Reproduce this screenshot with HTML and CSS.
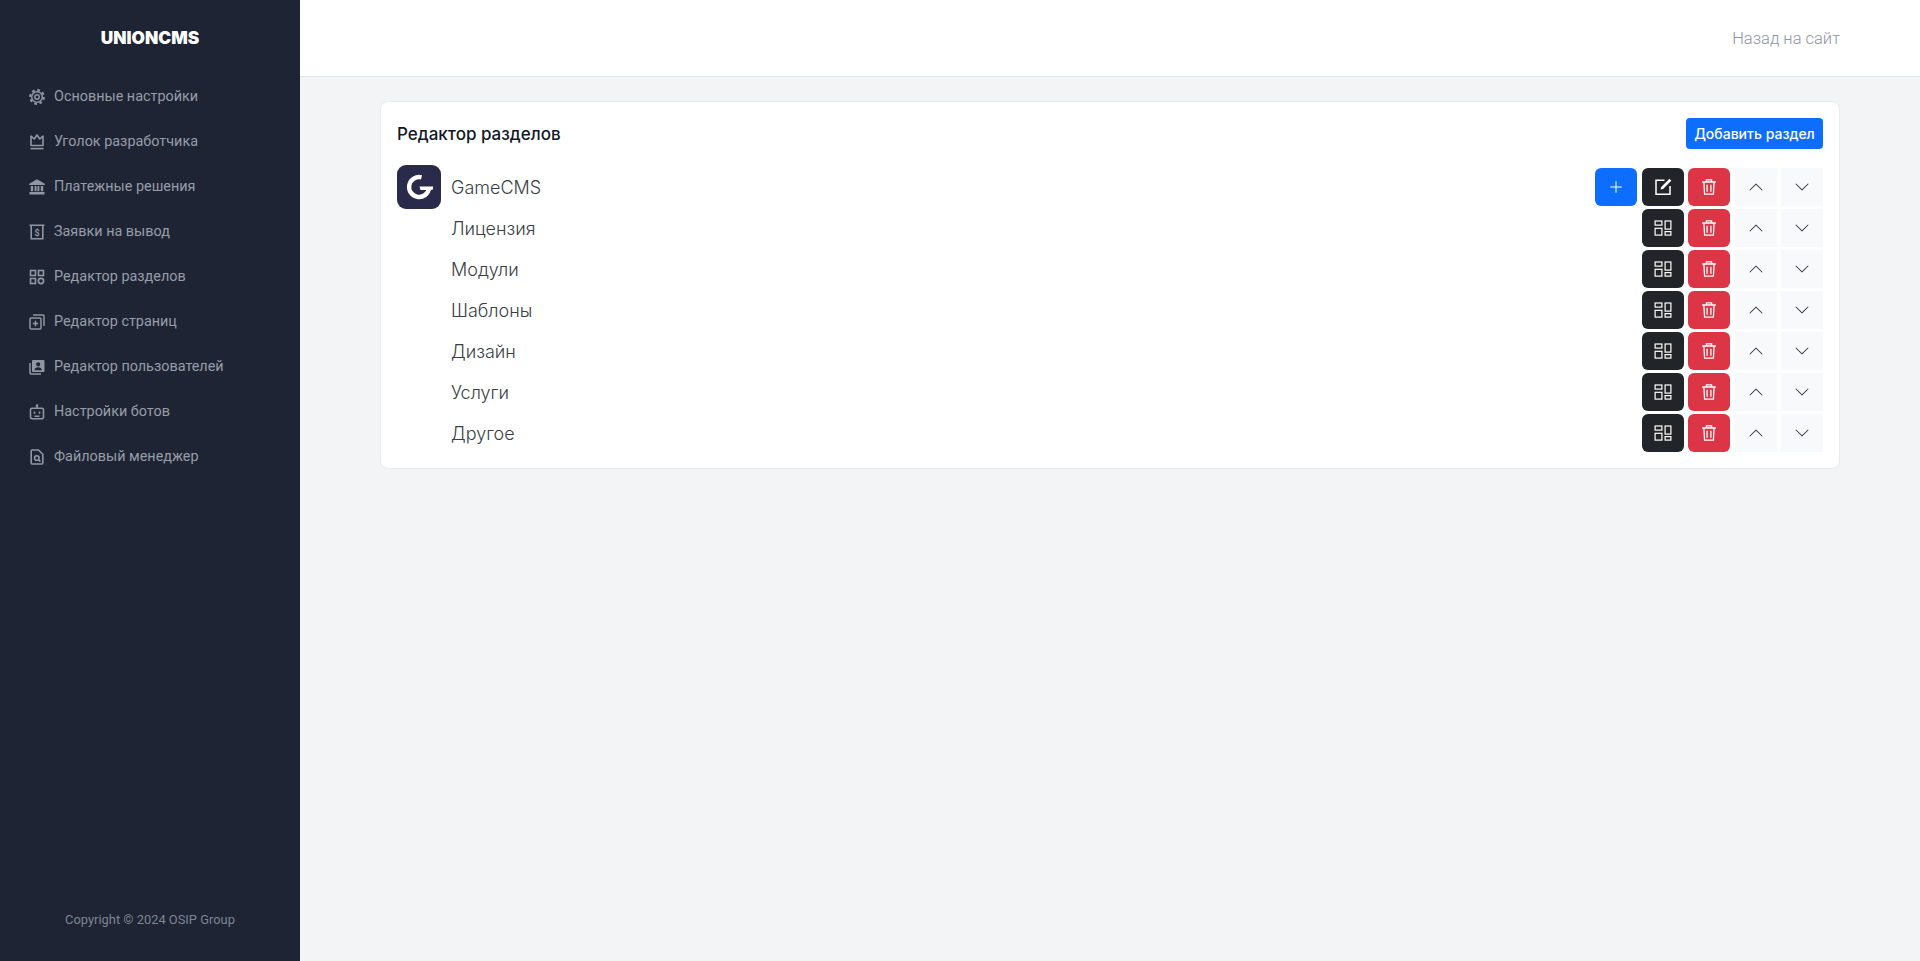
FILE: index.html
```html
<!DOCTYPE html>
<html lang="ru">
<head>
<meta charset="utf-8">
<title>UNIONCMS</title>
<link rel="stylesheet" href="styles.css">
</head>
<body>
<svg class="defs" width="0" height="0" aria-hidden="true">
  <defs>
    <symbol id="i-grid" viewBox="0 0 18 18"><g fill="none" stroke="currentColor" stroke-width="1.2"><rect x="1.1" y="2" width="6.8" height="4.1"/><rect x="1.1" y="9.3" width="6.8" height="6.8"/><rect x="11.1" y="2" width="5.8" height="8.1"/><rect x="11.1" y="12.6" width="5.8" height="3.5"/></g></symbol>
    <symbol id="i-trash" viewBox="0 0 18 18"><g fill="none" stroke="currentColor" stroke-width="1.3"><path d="M2.2 4h13.6M6.4 3.9V1.9h5.2v2M3.9 4.2l.7 12h8.8l.7-12M7.1 6.8v7M10.9 6.8v7"/></g></symbol>
    <symbol id="i-up" viewBox="0 0 16 16"><path fill="currentColor" d="M7.646 4.646a.5.5 0 0 1 .708 0l6 6a.5.5 0 0 1-.708.708L8 5.707l-5.646 5.647a.5.5 0 0 1-.708-.708l6-6z"/></symbol>
    <symbol id="i-down" viewBox="0 0 16 16"><path fill="currentColor" d="M1.646 4.646a.5.5 0 0 1 .708 0L8 10.293l5.646-5.647a.5.5 0 0 1 .708.708l-6 6a.5.5 0 0 1-.708 0l-6-6a.5.5 0 0 1 0-.708z"/></symbol>
  </defs>
</svg>
<aside class="sidebar">
  <div class="brand">UNIONCMS</div>
  <nav class="menu">
    <a class="menu-item"><svg class="menu-icon" viewBox="0 0 16 16"><g fill="none" stroke="currentColor"><circle cx="8" cy="8" r="5.3" stroke-width="1.5"/><circle cx="8" cy="8" r="6.9" stroke-width="2" stroke-dasharray="2.8 2.62"/><circle cx="8" cy="8" r="2.2" stroke-width="1.5"/></g></svg><span>Основные настройки</span></a>
    <a class="menu-item"><svg class="menu-icon" viewBox="0 0 16 16"><g fill="none" stroke="currentColor" stroke-width="1.6"><path d="M2 2l3.2 3L8 1l2.8 4L14 2v9.5H2z" stroke-linejoin="round"/><path d="M1.5 14.6h13"/></g></svg><span>Уголок разработчика</span></a>
    <a class="menu-item"><svg class="menu-icon" viewBox="0 0 16 16"><path fill="currentColor" d="M8 .3l7.8 4.4V6H.2V4.7zM1.8 7h2.4v5.2H1.8zm3.8 0H7.6v5.2H5.6zm2.8 0h2v5.2h-2zm3.4 0h2.4v5.2h-2.4zM.5 13h15v2.6H.5z"/></svg><span>Платежные решения</span></a>
    <a class="menu-item"><svg class="menu-icon" viewBox="0 0 16 16"><g fill="none" stroke="currentColor" stroke-width="1.6"><path d="M.5 1.3h15M2.2 1.3v13.4h11.6V1.3"/></g><text class="dollar" x="8" y="11.5" text-anchor="middle">$</text></svg><span>Заявки на вывод</span></a>
    <a class="menu-item"><svg class="menu-icon" viewBox="0 0 16 16"><g fill="none" stroke="currentColor" stroke-width="1.6"><rect x="1.5" y="1.5" width="5" height="5"/><rect x="9.5" y="1.5" width="5" height="5"/><rect x="1.5" y="9.5" width="5" height="5"/><circle cx="12" cy="12" r="2.6"/></g></svg><span>Редактор разделов</span></a>
    <a class="menu-item"><svg class="menu-icon" viewBox="0 0 16 16"><g fill="none" stroke="currentColor" stroke-width="1.5"><rect x="1" y="4" width="11" height="11" rx="1"/><path d="M4 1h10a1 1 0 0 1 1 1v10M6.5 6.8v5.4M3.8 9.5h5.4"/></g></svg><span>Редактор страниц</span></a>
    <a class="menu-item"><svg class="menu-icon" viewBox="0 0 16 16"><path fill="none" stroke="currentColor" stroke-width="1.5" d="M1 4v10a1 1 0 0 0 1 1h10"/><path fill="currentColor" fill-rule="evenodd" d="M4 1h10.5a1 1 0 0 1 1 1v10a1 1 0 0 1-1 1H4a1 1 0 0 1-1-1V2a1 1 0 0 1 1-1zm5.2 2.2a2.1 2.1 0 1 0 0 4.2 2.1 2.1 0 0 0 0-4.2zM5.6 11.2h7.2c0-2-1.6-3-3.6-3s-3.6 1-3.6 3z"/></svg><span>Редактор пользователей</span></a>
    <a class="menu-item"><svg class="menu-icon" viewBox="0 0 16 16"><g fill="none" stroke="currentColor" stroke-width="1.6"><rect x="1.5" y="4.2" width="13" height="10.6" rx="1.5"/><path d="M8 1.5v2.7M5.5 7.4v2.4M10.5 7.4v2.4M5.5 12.2h5"/></g><circle cx="8" cy="1.5" r="1.3" fill="currentColor"/></svg><span>Настройки ботов</span></a>
    <a class="menu-item"><svg class="menu-icon" viewBox="0 0 16 16"><g fill="none" stroke="currentColor" stroke-width="1.6"><path d="M2.2 2a1 1 0 0 1 1-1h6.3l4.3 4.3V14a1 1 0 0 1-1 1H3.2a1 1 0 0 1-1-1z"/><circle cx="7.8" cy="9" r="2.3"/><path d="M9.5 10.8l1.8 1.8"/></g></svg><span>Файловый менеджер</span></a>
  </nav>
  <div class="copyright">Copyright © 2024 OSIP Group</div>
</aside>
<div class="main">
  <header class="topbar"><a class="back-link">Назад на сайт</a></header>
  <div class="content">
    <section class="card">
      <div class="card-head">
        <h1 class="card-title">Редактор разделов</h1>
        <button class="add-btn">Добавить раздел</button>
      </div>
      <div class="rows">
        <div class="row">
          <div class="logo"><svg viewBox="0 0 44 44" width="44" height="44"><path fill="none" stroke="#fff" stroke-width="4.4" d="M24.5 12.3A10 10 0 1 0 32 23.5"/><path fill="#fff" d="M22.5 21.4h13.6l-.4 3.4-2.7.2H23.5z"/></svg></div>
          <span class="row-name">GameCMS</span>
          <div class="actions">
            <button class="btn btn-blue"><svg class="ico-plus" viewBox="0 0 16 16"><path fill="none" stroke="currentColor" stroke-width="1.2" d="M8 1.5v13M1.5 8h13"/></svg></button>
            <button class="btn btn-dark"><svg class="ico" viewBox="0 0 18 18"><g fill="none" stroke="currentColor" stroke-width="1.5"><path d="M10.5 2.2H2v14h14V8"/></g><path fill="currentColor" d="M15.4.8l1.9 1.9-8.2 8.2-2.6.7.7-2.6z"/></svg></button>
            <button class="btn btn-red"><svg class="ico"><use href="#i-trash"/></svg></button>
            <button class="btn btn-light btn-first"><svg class="ico-chev"><use href="#i-up"/></svg></button>
            <button class="btn btn-light"><svg class="ico-chev"><use href="#i-down"/></svg></button>
          </div>
        </div>
        <div class="row"><span class="row-name">Лицензия</span><div class="actions"><button class="btn btn-dark"><svg class="ico"><use href="#i-grid"/></svg></button><button class="btn btn-red"><svg class="ico"><use href="#i-trash"/></svg></button><button class="btn btn-light btn-first"><svg class="ico-chev"><use href="#i-up"/></svg></button><button class="btn btn-light"><svg class="ico-chev"><use href="#i-down"/></svg></button></div></div>
        <div class="row"><span class="row-name">Модули</span><div class="actions"><button class="btn btn-dark"><svg class="ico"><use href="#i-grid"/></svg></button><button class="btn btn-red"><svg class="ico"><use href="#i-trash"/></svg></button><button class="btn btn-light btn-first"><svg class="ico-chev"><use href="#i-up"/></svg></button><button class="btn btn-light"><svg class="ico-chev"><use href="#i-down"/></svg></button></div></div>
        <div class="row"><span class="row-name">Шаблоны</span><div class="actions"><button class="btn btn-dark"><svg class="ico"><use href="#i-grid"/></svg></button><button class="btn btn-red"><svg class="ico"><use href="#i-trash"/></svg></button><button class="btn btn-light btn-first"><svg class="ico-chev"><use href="#i-up"/></svg></button><button class="btn btn-light"><svg class="ico-chev"><use href="#i-down"/></svg></button></div></div>
        <div class="row"><span class="row-name">Дизайн</span><div class="actions"><button class="btn btn-dark"><svg class="ico"><use href="#i-grid"/></svg></button><button class="btn btn-red"><svg class="ico"><use href="#i-trash"/></svg></button><button class="btn btn-light btn-first"><svg class="ico-chev"><use href="#i-up"/></svg></button><button class="btn btn-light"><svg class="ico-chev"><use href="#i-down"/></svg></button></div></div>
        <div class="row"><span class="row-name">Услуги</span><div class="actions"><button class="btn btn-dark"><svg class="ico"><use href="#i-grid"/></svg></button><button class="btn btn-red"><svg class="ico"><use href="#i-trash"/></svg></button><button class="btn btn-light btn-first"><svg class="ico-chev"><use href="#i-up"/></svg></button><button class="btn btn-light"><svg class="ico-chev"><use href="#i-down"/></svg></button></div></div>
        <div class="row"><span class="row-name">Другое</span><div class="actions"><button class="btn btn-dark"><svg class="ico"><use href="#i-grid"/></svg></button><button class="btn btn-red"><svg class="ico"><use href="#i-trash"/></svg></button><button class="btn btn-light btn-first"><svg class="ico-chev"><use href="#i-up"/></svg></button><button class="btn btn-light"><svg class="ico-chev"><use href="#i-down"/></svg></button></div></div>
      </div>
    </section>
  </div>
</div>
</body>
</html>
```
FILE: styles.css
```css
* { box-sizing: border-box; }
html, body { margin: 0; height: 100%; }
body {
  display: flex;
  height: 961px;
  overflow: hidden;
  background: #f3f4f6;
  font-family: "Inter", "Liberation Sans", sans-serif;
}
.defs { display: block; width: 0; height: 0; flex: none; }
.sidebar {
  flex: none;
  width: 300px;
  display: flex;
  flex-direction: column;
  background: #1e2433;
  color: #9ca3af;
  font-family: "Roboto", "Liberation Sans", sans-serif;
}
.brand {
  height: 74px;
  display: flex;
  align-items: center;
  justify-content: center;
  font-family: "Inter", sans-serif;
  font-weight: 900;
  font-size: 17.3px;
  color: #fff;
}
.menu {
  display: flex;
  flex-direction: column;
  flex: 1;
}
.menu-item {
  display: flex;
  align-items: center;
  height: 45px;
  padding-left: 29px;
  gap: 9px;
  font-size: 14.4px;
  color: #969da9;
}
.menu-icon { width: 16px; height: 16px; flex: none; color: #8f97a5; }
.dollar { font: 700 9px "Roboto", sans-serif; fill: currentColor; }
.copyright {
  height: 84px;
  text-align: center;
  font-size: 12.9px;
  line-height: 86px;
  color: #7d8494;
}
.main { flex: 1; display: flex; flex-direction: column; min-width: 0; }
.topbar {
  height: 77px;
  flex: none;
  background: #fff;
  border-bottom: 1px solid #e2e4e9;
  display: flex;
  align-items: center;
  justify-content: flex-end;
  padding-right: 80px;
}
.back-link {
  font-family: "Roboto", sans-serif;
  font-weight: 300;
  font-size: 16.5px;
  color: #8f94a5;
}
.content { padding: 24px 80px 0; }
.card {
  background: #fff;
  border: 1px solid #e8eaee;
  border-radius: 8px;
  padding: 16px;
}
.card-head {
  display: flex;
  align-items: center;
  justify-content: space-between;
  height: 31px;
  margin-bottom: 19px;
}
.card-title {
  margin: 0;
  font-size: 17px;
  font-weight: 500;
  color: #111827;
}
.add-btn {
  width: 137px;
  height: 31px;
  border: 0;
  border-radius: 4px;
  background: #0d6efd;
  color: #fff;
  font: 500 14px "Inter", sans-serif;
  padding: 0;
}
.rows { display: flex; flex-direction: column; gap: 3px; }
.row {
  display: flex;
  align-items: center;
  height: 38px;
  padding-left: 54px;
  position: relative;
}
.logo {
  position: absolute;
  left: 0;
  top: -3px;
  width: 44px;
  height: 44px;
  border-radius: 9px;
  background: #2a2a4a;
}
.logo svg { display: block; }
.row-name {
  font-size: 18px;
  font-weight: 300;
  color: #3a3f45;
}
.actions {
  margin-left: auto;
  display: flex;
  gap: 5px;
}
.btn {
  display: flex;
  align-items: center;
  justify-content: center;
  width: 42px;
  height: 38px;
  border: 0;
  border-radius: 6px;
  padding: 0;
}
.btn-blue { background: #0d6efd; color: #fff; }
.btn-dark { background: #212529; color: #fff; }
.btn-red { background: #dc3545; color: #fff; margin-left: -1px; }
.btn-light { background: #f8f9fa; color: #343a40; border-radius: 0; margin-left: -1px; }
.btn-first { margin-left: 0; }
.ico { width: 18px; height: 18px; }
.ico-plus { width: 14px; height: 14px; }
.ico-chev { width: 16px; height: 16px; }
```
